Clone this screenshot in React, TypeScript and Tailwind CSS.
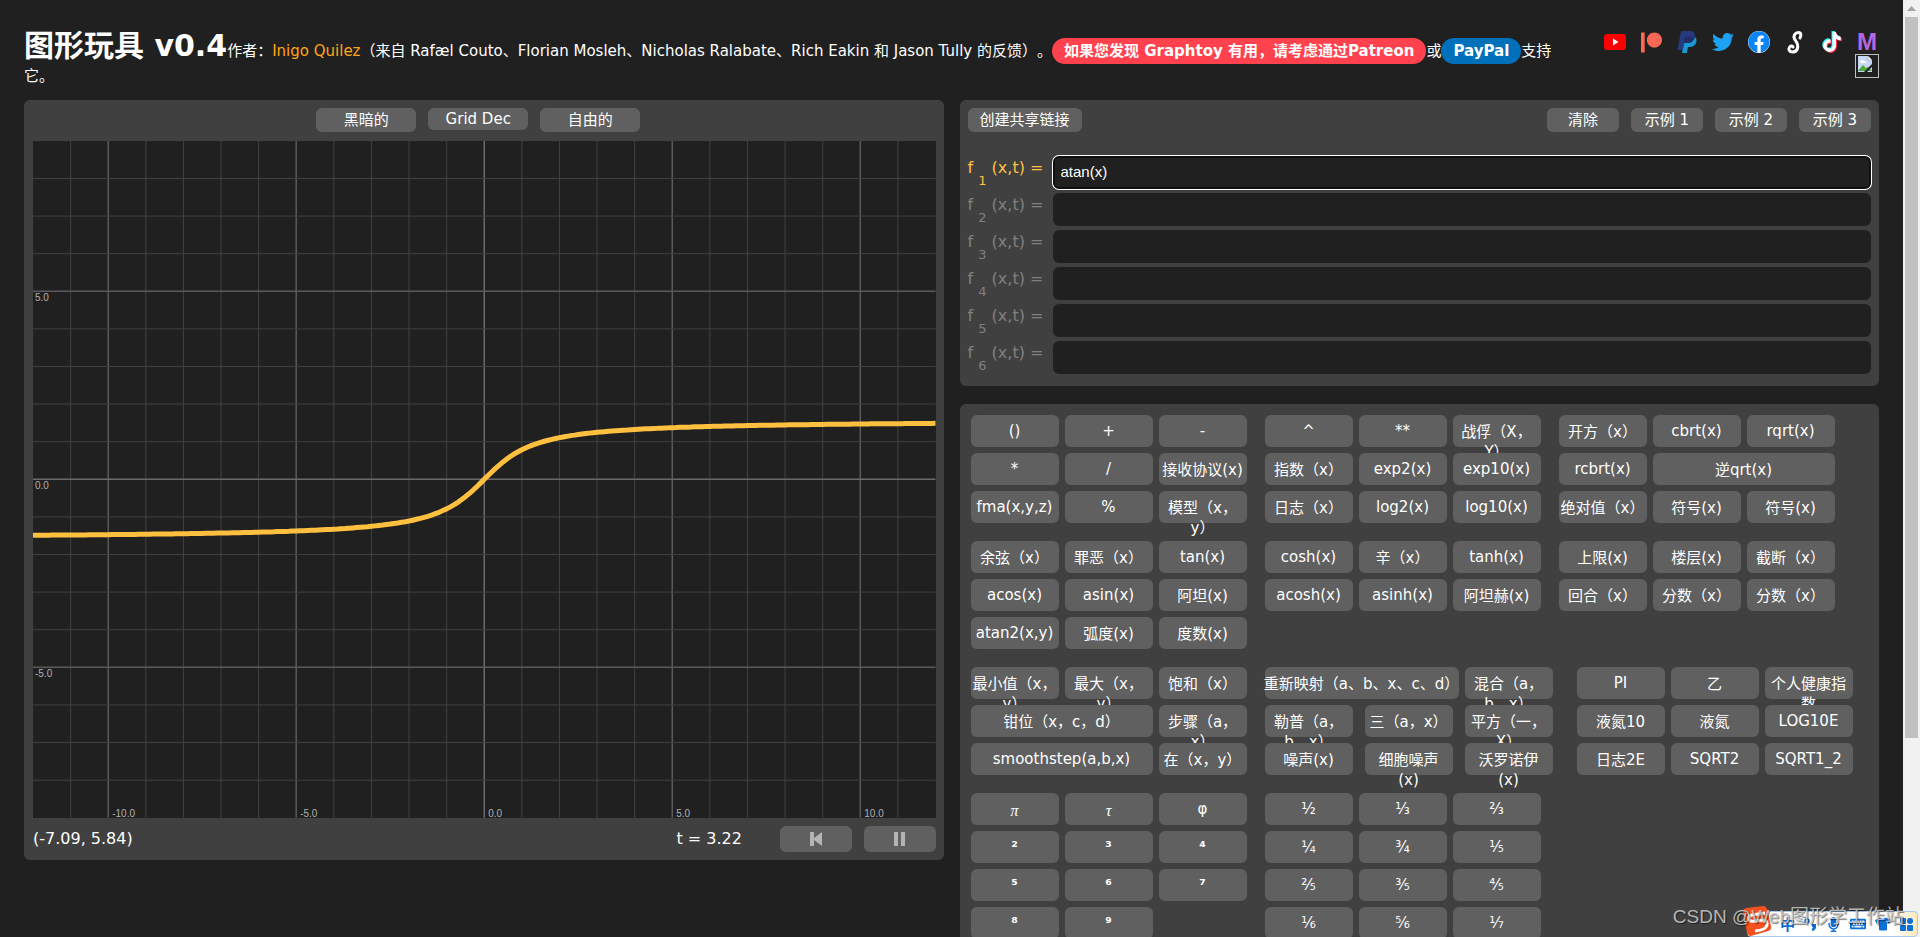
import type { ReactNode } from "react";
import {
    FaFacebook,
    FaKeyboard,
    FaMicrophone,
    FaPatreon,
    FaTiktok,
    FaTshirt,
    FaTwitter,
} from "react-icons/fa";

type Key = { label: ReactNode; size?: "md" | "lg" | "xl"; cjk?: boolean };
type KeyGroup = { rows: (string | Key)[][]; spread?: boolean };

const italic = (s: string): Key => ({
    label: <i className="font-['Liberation_Serif',serif] text-base">{s}</i>,
});

const power = (s: string): Key => ({ label: <b>{s}</b> });

const SECTIONS: KeyGroup[][] = [
    [
        {
            rows: [
                ["()", "+", "-"],
                ["*", "/", "接收协议(x)"],
                ["fma(x,y,z)", "%", "模型（x，y）"],
            ],
        },
        {
            rows: [
                ["^", "**", "战俘（X，Y）"],
                ["指数（x）", "exp2(x)", "exp10(x)"],
                ["日志（x）", "log2(x)", "log10(x)"],
            ],
        },
        {
            rows: [
                ["开方（x）", "cbrt(x)", "rqrt(x)"],
                ["rcbrt(x)", { label: "逆qrt(x)", size: "lg", cjk: true }],
                ["绝对值（x）", "符号(x)", "符号(x)"],
            ],
        },
    ],
    [
        {
            rows: [
                ["余弦（x）", "罪恶（x）", "tan(x)"],
                ["acos(x)", "asin(x)", "阿坦(x)"],
                ["atan2(x,y)", "弧度(x)", "度数(x)"],
            ],
        },
        {
            rows: [
                ["cosh(x)", "辛（x）", "tanh(x)"],
                ["acosh(x)", "asinh(x)", "阿坦赫(x)"],
            ],
        },
        {
            rows: [
                ["上限(x)", "楼层(x)", "截断（x）"],
                ["回合（x）", "分数（x）", "分数（x）"],
            ],
        },
    ],
    [
        {
            rows: [
                ["最小值（x，y）", "最大（x，y）", "饱和（x）"],
                [
                    { label: "钳位（x，c，d）", size: "lg", cjk: true },
                    "步骤（a，x）",
                ],
                [{ label: "smoothstep(a,b,x)", size: "lg" }, "在（x，y）"],
            ],
        },
        {
            spread: true,
            rows: [
                [
                    {
                        label: "重新映射（a、b、x、c、d）",
                        size: "xl",
                        cjk: true,
                    },
                    "混合（a，b，x）",
                ],
                ["勒普（a，b，x）", "三（a，x）", "平方（一，X）"],
                ["噪声(x)", "细胞噪声\n(x)", "沃罗诺伊\n(x)"],
            ],
        },
        {
            rows: [
                ["PI", "乙", "个人健康指数"],
                ["液氮10", "液氮", "LOG10E"],
                ["日志2E", "SQRT2", "SQRT1_2"],
            ],
        },
    ],
    [
        {
            rows: [
                [italic("π"), italic("τ"), "φ"],
                [power("²"), power("³"), power("⁴")],
                [power("⁵"), power("⁶"), power("⁷")],
                [power("⁸"), power("⁹")],
            ],
        },
        {
            rows: [
                ["½", "⅓", "⅔"],
                ["¼", "¾", "⅕"],
                ["⅖", "⅗", "⅘"],
                ["⅙", "⅚", "⅐"],
            ],
        },
    ],
];

const KEY_WIDTH = { md: "w-[88px]", lg: "w-[182px]", xl: "w-[194px]" };

function KeyButton({ item }: { item: string | Key }) {
    const key: Key =
        typeof item === "string"
            ? { label: item, cjk: /[\u4e00-\u9fff]/.test(item) }
            : item;
    return (
        <button
            className={`flex h-8 shrink-0 items-start justify-center rounded-md bg-[#606060] leading-5 ${
                KEY_WIDTH[key.size ?? "md"]
            } ${key.size === "xl" ? "whitespace-nowrap" : "whitespace-pre-line"} ${
                key.cjk ? "pt-[7px]" : "pt-1.5"
            }`}
        >
            {key.label}
        </button>
    );
}

function Keypad() {
    return (
        <section className="flex flex-col gap-[18px] rounded-md bg-[#404040] py-[11px] pl-[11px]">
            {SECTIONS.map((groups, i) => (
                <div key={i} className="flex gap-[18px]">
                    {groups.map((group, g) => (
                        <div
                            key={g}
                            className={`flex shrink-0 flex-col gap-1.5 ${
                                group.spread ? "mr-1.5 w-72" : ""
                            }`}
                        >
                            {group.rows.map((row, r) => (
                                <div
                                    key={r}
                                    className={`flex ${
                                        group.spread
                                            ? "justify-between"
                                            : "gap-1.5"
                                    }`}
                                >
                                    {row.map((item, k) => (
                                        <KeyButton key={k} item={item} />
                                    ))}
                                </div>
                            ))}
                        </div>
                    ))}
                </div>
            ))}
        </section>
    );
}

// Plot area: 24 x 18 units, origin in the centre
const W = 903;
const H = 677;
const UNIT = W / 24;
const px = (x: number) => W / 2 + x * UNIT;
const py = (y: number) => H / 2 - y * UNIT;

const range = (n: number) => Array.from({ length: 2 * n + 1 }, (_, i) => i - n);
const lineColor = (n: number) =>
    n === 0 ? "#6a6a6a" : n % 5 === 0 ? "#5a5a5a" : "#404040";

const curve = Array.from({ length: 241 }, (_, i) => {
    const x = -12 + i / 10;
    return `${px(x).toFixed(1)},${py(Math.atan(x)).toFixed(1)}`;
}).join(" ");

function Graph() {
    return (
        <svg
            viewBox={`0 0 ${W} ${H}`}
            className="block w-full bg-[#202020]"
            fontFamily="Liberation Sans, Arial, sans-serif"
            fontSize="10"
            fill="#b0b0b0"
        >
            {range(11).map((n) => (
                <line
                    key={`x${n}`}
                    x1={px(n)}
                    x2={px(n)}
                    y1={0}
                    y2={H}
                    stroke={lineColor(n)}
                    strokeWidth={n % 5 === 0 ? 1.5 : 1}
                />
            ))}
            {range(8).map((n) => (
                <line
                    key={`y${n}`}
                    x1={0}
                    x2={W}
                    y1={py(n)}
                    y2={py(n)}
                    stroke={lineColor(n)}
                    strokeWidth={n % 5 === 0 ? 1.5 : 1}
                />
            ))}
            {[-10, -5, 0, 5, 10].map((n) => (
                <text key={n} x={px(n) + 4} y={H - 1}>
                    {n.toFixed(1)}
                </text>
            ))}
            {[-5, 0, 5].map((n) => (
                <text key={n} x={2} y={py(n) + 10}>
                    {n.toFixed(1)}
                </text>
            ))}
            <polyline
                points={curve}
                fill="none"
                stroke="#ffc040"
                strokeWidth="5"
                strokeLinejoin="round"
            />
        </svg>
    );
}

function GraphPanel() {
    return (
        <section className="min-w-0 rounded-md bg-[#404040] py-2 pr-2 pl-[9px]">
            <div className="flex h-[33px] items-start justify-center gap-3 pr-3">
                <button className="h-6 w-[100px] rounded-md bg-[#606060] leading-6">
                    黑暗的
                </button>
                <button className="h-[22px] w-[100px] rounded-md bg-[#606060] leading-5">
                    Grid Dec
                </button>
                <button className="h-6 w-[100px] rounded-md bg-[#606060] leading-6">
                    自由的
                </button>
            </div>
            <Graph />
            <div className="flex items-center justify-between pt-2">
                <output className="text-base leading-[26px]">
                    (-7.09, 5.84)
                </output>
                <div className="flex">
                    <span className="w-[103px] text-base leading-[26px]">
                        t = 3.22
                    </span>
                    <button
                        aria-label="Rewind"
                        className="mr-3 flex h-[26px] w-[72px] items-center justify-center rounded-md bg-[#606060]"
                    >
                        <svg width="12" height="14" fill="#b4b4b4">
                            <path d="M0 0h4v6L12 0v14L4 8v6H0z" />
                        </svg>
                    </button>
                    <button
                        aria-label="Pause"
                        className="flex h-[26px] w-[72px] items-center justify-center rounded-md bg-[#606060]"
                    >
                        <svg width="11" height="14" fill="#b4b4b4">
                            <path d="M0 0h4v14H0zM7 0h4v14H7z" />
                        </svg>
                    </button>
                </div>
            </div>
        </section>
    );
}

function FormulaPanel() {
    return (
        <section className="rounded-md bg-[#404040] px-2 pt-2 pb-3">
            <div className="mb-6 flex gap-3">
                <button className="mr-auto h-6 rounded-md bg-[#606060] px-3 leading-6">
                    创建共享链接
                </button>
                {["清除", "示例 1", "示例 2", "示例 3"].map((label) => (
                    <button
                        key={label}
                        className="h-6 w-[72px] rounded-md bg-[#606060] leading-6"
                    >
                        {label}
                    </button>
                ))}
            </div>
            <div className="flex flex-col gap-1">
                {[1, 2, 3, 4, 5, 6].map((n) => (
                    <div key={n} className="flex h-[33px]">
                        <label
                            htmlFor={`f${n}`}
                            className={`w-[85px] shrink-0 pt-0.5 text-base leading-5 whitespace-nowrap ${
                                n === 1 ? "text-[#ffc040]" : "text-[#808080]"
                            }`}
                        >
                            f{" "}
                            <sub className="static align-[-12px] text-[13px] leading-none">
                                {n}
                            </sub>{" "}
                            (x,t) =
                        </label>
                        <input
                            id={`f${n}`}
                            type="text"
                            defaultValue={n === 1 ? "atan(x)" : ""}
                            className={`min-w-0 flex-1 rounded-md border-2 bg-[#202020] px-1.5 font-['Liberation_Sans',Arial,sans-serif] outline-none ${
                                n === 1
                                    ? "border-[#101010] ring-1 ring-white"
                                    : "border-[#202020]"
                            }`}
                        />
                    </div>
                ))}
            </div>
        </section>
    );
}

function SocialLinks() {
    return (
        <nav className="flex w-[276px] shrink-0 flex-wrap content-start justify-end gap-x-3 pt-1.5">
            <a href="#youtube" aria-label="YouTube" className="size-6">
                <svg viewBox="0 0 24 24">
                    <rect x="1" y="4" width="22" height="16" rx="3" fill="#f00" />
                    <path d="M10 8.500l5.500 3.500-5.500 3.500z" fill="#fff" />
                </svg>
            </a>
            <a
                href="#patreon"
                aria-label="Patreon"
                className="flex size-6 items-center justify-center"
            >
                <FaPatreon size={21} color="#f96854" />
            </a>
            <a href="#paypal" aria-label="PayPal" className="size-6">
                <svg viewBox="0 0 24 24">
                    <path
                        d="M9 6h9c3 1 4 3 3.300 6-.8 3.500-3.300 5-6.800 5h-1.600l-1 6H7z"
                        fill="#179bd7"
                    />
                    <path
                        d="M6 1h8.500c4 0 6 2 5.300 5.800-.8 4.200-3.600 6.200-7.600 6.200H9.200L8 20H2.500z"
                        fill="#253b80"
                    />
                    <path
                        d="M10 6.500h7c1 0 2 .2 2.700.7-.9 4-3.600 5.800-7.500 5.800H9z"
                        fill="#222d65"
                    />
                </svg>
            </a>
            <a
                href="#twitter"
                aria-label="Twitter"
                className="flex size-6 items-center justify-center"
            >
                <FaTwitter size={22} color="#1da1f2" />
            </a>
            <a
                href="#facebook"
                aria-label="Facebook"
                className="flex size-6 items-center justify-center"
            >
                <span className="rounded-full bg-white">
                    <FaFacebook size={22} color="#0a85f5" />
                </span>
            </a>
            <a href="#shadertoy" aria-label="Shadertoy" className="size-6">
                <svg viewBox="0 0 24 24" fill="none" stroke="#fff">
                    <path
                        d="M17 8c1.500-3 1-5.500-1.500-5.500-3.500 0-5.500 3.500-4 6.500 1 2 3.500 4 3.300 7.500-.3 3.500-2.500 5.500-5.300 5.500-3 0-4.500-2.500-3-4.800 1-1.500 3-1.700 3.500-.2"
                        strokeWidth="3"
                        strokeLinecap="round"
                    />
                </svg>
            </a>
            <a href="#tiktok" aria-label="TikTok" className="size-6">
                <svg viewBox="0 0 24 24">
                    <FaTiktok x="2" y="1" size={20} color="#25f4ee" />
                    <FaTiktok x="4" y="3" size={20} color="#fe2c55" />
                    <FaTiktok x="3" y="2" size={20} color="#fff" />
                </svg>
            </a>
            <a
                href="#mastodon"
                className="flex size-6 items-center justify-center font-['Liberation_Sans',Arial,sans-serif] text-2xl font-bold text-[#b866e0]"
            >
                M
            </a>
            <a
                href="#more"
                aria-label="More"
                className="size-6 border border-[#c0c0c0] p-px"
            >
                <svg width="16" height="16" viewBox="0 0 16 16">
                    <path d="M1 0h10l4 4v12H1z" fill="#c4d7f5" />
                    <path d="M11 0v4h4z" fill="#fff" stroke="#8a8a8a" strokeWidth=".5" />
                    <path d="M3 6c0-2 3-3 4-1 2-.5 3 1 2 2H4z" fill="#fff" />
                    <path d="M1 15l5-6 3 3 2-1 4 4z" fill="#4fa83a" />
                    <path d="M16 7L7 16h3l6-6z" fill="#202020" />
                </svg>
            </a>
        </nav>
    );
}

function Header() {
    return (
        <header className="flex h-[76px] justify-between">
            <div className="max-w-[1544px] pt-1 leading-6">
                <h1 className="inline text-[30px] leading-9 font-bold">
                    图形玩具 v0.4
                </h1>
                作者：
                <a href="#inigo" className="text-[#ffa516]">
                    Inigo Quilez
                </a>
                （来自 Rafæl Couto、Florian Mosleh、Nicholas Ralabate、Rich Eakin
                和 Jason Tully 的反馈）。
                <a
                    href="#support-patreon"
                    className="inline-block rounded-full bg-[#ff424d] px-3 leading-[26px] font-bold"
                >
                    如果您发现 Graphtoy 有用，请考虑通过Patreon
                </a>
                或
                <a
                    href="#support-paypal"
                    className="inline-block rounded-full bg-[#0070ba] px-3 leading-[26px] font-bold"
                >
                    PayPal
                </a>
                支持它。
            </div>
            <SocialLinks />
        </header>
    );
}

function Scrollbar() {
    return (
        <div className="flex w-[17px] shrink-0 flex-col items-center bg-[#f1f1f1]">
            <svg width="17" height="17" fill="#a3a3a3">
                <path d="M4 11l4.500-5 4.500 5z" />
            </svg>
            <div className="h-[77%] w-[13px] bg-[#c1c1c1]" />
        </div>
    );
}

// Input-method toolbar that floats above the page
function ImeBar() {
    return (
        <div className="absolute right-0.5 bottom-0 flex h-[26px] w-[171px] items-center justify-between rounded-sm border border-[#a9c8ea] bg-gradient-to-r from-white from-85% to-[#fbe9bb] pr-1 pl-8 text-[#0a6fd8]">
            <svg
                className="absolute bottom-0 -left-1.5"
                width="30"
                height="30"
                viewBox="0 0 30 30"
            >
                <path d="M1 5Q1 3 4 2L21 0q3 0 4 3l4 17q1 4-3 5L9 30q-3 0-4-3z" fill="#f4511e" />
                <path
                    d="M23 7L10 9q-4 1-3 4t5 2l9-1q5 0 4 5-1 5-12 6"
                    fill="none"
                    stroke="#fff"
                    strokeWidth="3"
                />
            </svg>
            <span className="font-['Noto_Sans_CJK_SC',sans-serif] text-[15px] leading-5 font-bold">
                中
            </span>
            <svg width="13" height="13" viewBox="0 0 13 13" fill="currentColor">
                <circle cx="3" cy="3" r="2" fill="none" stroke="currentColor" strokeWidth="1.500" />
                <path d="M8 6h4v3q0 3-4 4v-2l1-2H8z" />
            </svg>
            <FaMicrophone size={15} />
            <FaKeyboard size={16} />
            <FaTshirt size={16} />
            <svg width="13" height="13" fill="currentColor">
                <rect width="6" height="6" rx="1" />
                <rect x="7" width="6" height="6" rx="3" />
                <rect y="7" width="6" height="6" rx="1" />
                <rect x="7" y="7" width="6" height="6" rx="1" />
            </svg>
        </div>
    );
}

export default function App() {
    return (
        <div className="relative flex h-screen overflow-hidden bg-[#202020] font-['DejaVu_Sans','Noto_Sans_CJK_SC',sans-serif] text-[15px] text-white [text-spacing-trim:space-all]">
            <main className="min-w-0 flex-1 overflow-hidden p-6">
                <Header />
                <div className="grid grid-cols-2 items-start gap-4">
                    <GraphPanel />
                    <div className="flex min-w-0 flex-col gap-[18px]">
                        <FormulaPanel />
                        <Keypad />
                    </div>
                </div>
            </main>
            <Scrollbar />
            <ImeBar />
            <p className="absolute right-4 bottom-2 font-['Liberation_Sans','Noto_Sans_CJK_SC',sans-serif] text-[19px] leading-6 text-[#c8c8c8]/90 [text-shadow:1px_1px_1px_#0008]">
                CSDN @Web图形学工作站
            </p>
        </div>
    );
}
